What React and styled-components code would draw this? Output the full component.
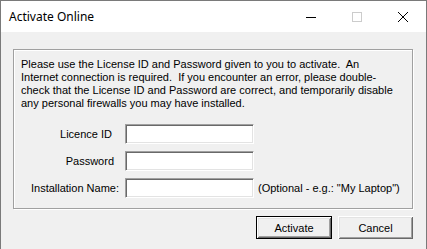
import React from "react";
import styled, { createGlobalStyle } from "styled-components";

const GlobalStyle = createGlobalStyle`
  html, body {
    margin: 0;
    padding: 0;
    background: #f0f0f0;
  }
  body {
    font-family: "Liberation Sans", Arial, sans-serif;
    color: #000;
  }
`;

const Window = styled.div`
  width: 427px;
  height: 249px;
  box-sizing: border-box;
  border: 1px solid #7a7a7a;
  border-bottom: none;
  background: #f0f0f0;
  display: flex;
  flex-direction: column;
  overflow: hidden;
`;

const TitleBar = styled.div`
  height: 31px;
  flex-shrink: 0;
  background: #fff;
  display: flex;
  align-items: center;
`;

const Title = styled.div`
  flex: 1;
  padding-left: 8px;
  font-family: "Noto Sans", "Liberation Sans", sans-serif;
  font-size: 12px;
  color: #000;
`;

const CaptionButton = styled.div`
  width: 46px;
  height: 31px;
  display: flex;
  align-items: center;
  justify-content: center;
`;

const Body = styled.div`
  padding: 17px 13px 0 12px;
  display: flex;
  flex-direction: column;
`;

const GroupBox = styled.div`
  border: 1px solid #a0a0a0;
  box-shadow: inset 1px 1px 0 #fff, 1px 1px 0 #fff;
  padding: 8px 7px 10px 7px;
  display: flex;
  flex-direction: column;
`;

const Intro = styled.p`
  margin: 0 0 14px 0;
  font-size: 11px;
  line-height: 13px;
`;

const Fields = styled.div`
  display: flex;
  flex-direction: column;
  gap: 7px;
`;

const Row = styled.div`
  display: flex;
  align-items: center;
  height: 20px;
`;

const Label = styled.label`
  width: 98px;
  box-sizing: border-box;
  padding-right: ${(p) => p.$inset || 0}px;
  text-align: right;
  font-size: 11px;
  margin-right: 6px;
  white-space: nowrap;
`;

const Input = styled.input`
  width: 129px;
  height: 20px;
  box-sizing: border-box;
  margin: 0;
  padding: 0 3px;
  background: #fff;
  border: 1px solid;
  border-color: #a0a0a0 #fff #fff #a0a0a0;
  box-shadow: inset 1px 1px 0 #696969, inset -1px -1px 0 #e3e3e3;
  font-family: "Liberation Sans", Arial, sans-serif;
  font-size: 11px;
  outline: none;
`;

const Hint = styled.span`
  margin-left: 4px;
  font-size: 11px;
  white-space: nowrap;
`;

const Buttons = styled.div`
  display: flex;
  justify-content: flex-end;
  gap: 6px;
  margin-top: 7px;
`;

const Button = styled.button`
  width: ${(p) => (p.$default ? 76 : 75)}px;
  height: 23px;
  box-sizing: border-box;
  margin: 0;
  padding: 0;
  background: #f0f0f0;
  border: ${(p) => (p.$default ? "1px solid #000" : "none")};
  box-shadow: inset 1px 1px 0 #fff, inset -1px -1px 0 #696969,
    inset 2px 2px 0 #e3e3e3, inset -2px -2px 0 #a0a0a0;
  font-family: "Liberation Sans", Arial, sans-serif;
  font-size: 11px;
  color: #000;
`;

const fields = [
  { label: "Licence ID", inset: 7 },
  { label: "Password", inset: 5, type: "password" },
  { label: "Installation Name:", inset: 0, hint: '(Optional - e.g.: "My Laptop")' },
];

export default function App() {
  return (
    <>
      <GlobalStyle />
      <Window>
        <TitleBar>
          <Title>Activate Online</Title>
          <CaptionButton>
            <svg width="10" height="10" viewBox="0 0 10 10">
              <path d="M0 5.5H10" stroke="#000" strokeWidth="1" />
            </svg>
          </CaptionButton>
          <CaptionButton>
            <svg width="10" height="10" viewBox="0 0 10 10">
              <rect x="0.5" y="0.5" width="9" height="9" fill="none" stroke="#ccc" strokeWidth="1" />
            </svg>
          </CaptionButton>
          <CaptionButton>
            <svg width="10" height="10" viewBox="0 0 10 10">
              <path d="M0 0L10 10M10 0L0 10" stroke="#000" strokeWidth="1" />
            </svg>
          </CaptionButton>
        </TitleBar>
        <Body>
          <GroupBox>
            <Intro>
              Please use the License ID and Password given to you to activate.&nbsp; An
              <br />
              Internet connection is required.&nbsp; If you encounter an error, please double-
              <br />
              check that the License ID and Password are correct, and temporarily disable
              <br />
              any personal firewalls you may have installed.
            </Intro>
            <Fields>
              {fields.map((f) => (
                <Row key={f.label}>
                  <Label $inset={f.inset}>{f.label}</Label>
                  <Input type={f.type || "text"} />
                  {f.hint && <Hint>{f.hint}</Hint>}
                </Row>
              ))}
            </Fields>
          </GroupBox>
          <Buttons>
            <Button $default>Activate</Button>
            <Button>Cancel</Button>
          </Buttons>
        </Body>
      </Window>
    </>
  );
}
